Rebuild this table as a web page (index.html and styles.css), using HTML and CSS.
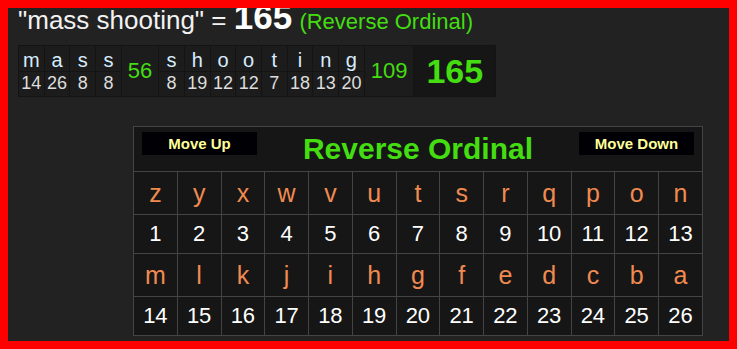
FILE: index.html
```html
<!DOCTYPE html>
<html>
<head>
<meta charset="utf-8">
<link rel="stylesheet" href="styles.css">
</head>
<body>
<div class="title">"mass shooting" = <span class="total">165</span> <span class="cipher">(Reverse Ordinal)</span></div>
<table class="breakdown">
  <tr class="letters">
    <td>m</td><td>a</td><td>s</td><td>s</td>
    <td class="sum" rowspan="2">56</td>
    <td>s</td><td>h</td><td>o</td><td>o</td><td>t</td><td>i</td><td>n</td><td>g</td>
    <td class="sum sum-wide" rowspan="2">109</td>
    <td class="grand" rowspan="2">165</td>
  </tr>
  <tr class="numbers">
    <td>14</td><td>26</td><td>8</td><td>8</td>
    <td>8</td><td>19</td><td>12</td><td>12</td><td>7</td><td>18</td><td>13</td><td>20</td>
  </tr>
</table>
<table class="chart">
  <tr>
    <td class="head" colspan="13">
      <div class="head-inner">
        <button class="move">Move Up</button>
        <span class="chart-title">Reverse Ordinal</span>
        <button class="move">Move Down</button>
      </div>
    </td>
  </tr>
  <tr class="row-letters">
    <td>z</td><td>y</td><td>x</td><td>w</td><td>v</td><td>u</td><td>t</td><td>s</td><td>r</td><td>q</td><td>p</td><td>o</td><td>n</td>
  </tr>
  <tr class="row-numbers">
    <td>1</td><td>2</td><td>3</td><td>4</td><td>5</td><td>6</td><td>7</td><td>8</td><td>9</td><td>10</td><td>11</td><td>12</td><td>13</td>
  </tr>
  <tr class="row-letters">
    <td>m</td><td>l</td><td>k</td><td>j</td><td>i</td><td>h</td><td>g</td><td>f</td><td>e</td><td>d</td><td>c</td><td>b</td><td>a</td>
  </tr>
  <tr class="row-numbers">
    <td>14</td><td>15</td><td>16</td><td>17</td><td>18</td><td>19</td><td>20</td><td>21</td><td>22</td><td>23</td><td>24</td><td>25</td><td>26</td>
  </tr>
</table>
<div class="frame"></div>
</body>
</html>
```

FILE: styles.css
```css
html, body {
  margin: 0;
  height: 100%;
  background: #222222;
}
body {
  font-family: "Liberation Sans", Arial, sans-serif;
  color: #eeeeee;
  padding: 0 0 0 18px;
  box-sizing: border-box;
  overflow: hidden;
}
.frame {
  position: fixed;
  inset: 0;
  border: 8px solid #ff0000;
  pointer-events: none;
}
.title {
  font-size: 26px;
  line-height: 30px;
  padding-top: 2px;
  white-space: nowrap;
  color: #f2f2f2;
}
.title .total {
  font-weight: bold;
  font-size: 35px;
  color: #ffffff;
}
.title .cipher {
  color: #44dd11;
  font-size: 22px;
}
.breakdown {
  border-collapse: collapse;
  margin-top: 8px;
  background: #1c1c1c;
}
.breakdown td {
  border: 1px solid #141414;
  text-align: center;
  padding: 0;
  width: 24.7px;
}
.breakdown .letters td {
  height: 25px;
  font-size: 20px;
  color: #d8ecff;
  vertical-align: bottom;
  line-height: 22px;
}
.breakdown .numbers td {
  height: 24px;
  font-size: 18px;
  color: #dddddd;
  vertical-align: top;
  line-height: 22px;
}
.breakdown .letters td.sum {
  width: auto;
  padding: 0 6px;
  font-size: 22px;
  color: #44dd11;
  vertical-align: middle;
}
.breakdown .letters td.sum-wide {
  padding: 0 6px;
}
.breakdown .letters td.grand {
  width: auto;
  padding: 0 12px;
  font-size: 34px;
  font-weight: bold;
  color: #44dd11;
  background: #161616;
  vertical-align: middle;
}
.chart {
  border-collapse: collapse;
  margin: 29px 0 0 115px;
  width: 570px;
  background: #161616;
}
.chart td {
  border: 1px solid #444444;
  text-align: center;
  padding: 0;
}
.chart td.head {
  height: 44px;
  vertical-align: top;
}
.head-inner {
  display: flex;
  justify-content: space-between;
  align-items: flex-start;
  padding: 5px 8px 0 8px;
}
.move {
  width: 115px;
  height: 23px;
  background: #000005;
  color: #ffff99;
  border: none;
  font-family: "Liberation Sans", Arial, sans-serif;
  font-weight: bold;
  font-size: 15px;
  padding: 0;
}
.chart-title {
  color: #44dd11;
  font-weight: bold;
  font-size: 30px;
  line-height: 34px;
}
.row-letters td {
  height: 42px;
  font-size: 25px;
  color: #f08a50;
}
.row-numbers td {
  height: 38px;
  font-size: 22px;
  color: #ffffff;
}
```
